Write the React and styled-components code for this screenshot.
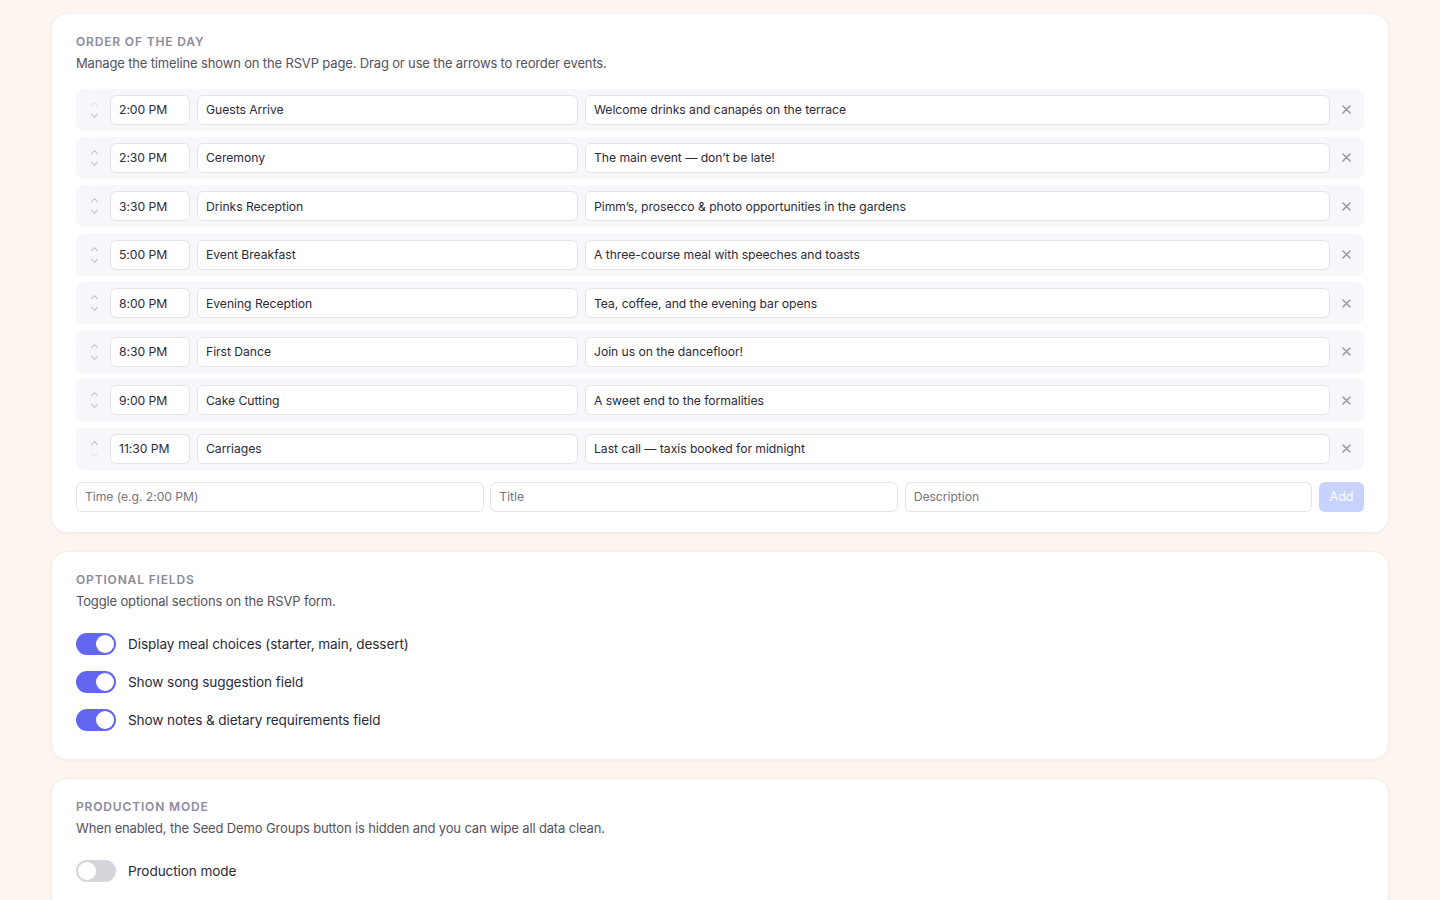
import React, { useState } from 'react'
import styled, { createGlobalStyle } from 'styled-components'

const GlobalStyle = createGlobalStyle`
  body {
    margin: 0;
    background: #fdf5ef;
    font-family: Inter, "Noto Sans", sans-serif;
    color: #2d2a3a;
  }
`

const initialEvents = [
  { time: '2:00 PM', title: 'Guests Arrive', desc: 'Welcome drinks and canapés on the terrace' },
  { time: '2:30 PM', title: 'Ceremony', desc: 'The main event — don’t be late!' },
  { time: '3:30 PM', title: 'Drinks Reception', desc: 'Pimm’s, prosecco & photo opportunities in the gardens' },
  { time: '5:00 PM', title: 'Event Breakfast', desc: 'A three-course meal with speeches and toasts' },
  { time: '8:00 PM', title: 'Evening Reception', desc: 'Tea, coffee, and the evening bar opens' },
  { time: '8:30 PM', title: 'First Dance', desc: 'Join us on the dancefloor!' },
  { time: '9:00 PM', title: 'Cake Cutting', desc: 'A sweet end to the formalities' },
  { time: '11:30 PM', title: 'Carriages', desc: 'Last call — taxis booked for midnight' },
]

const Chevron = ({ up, disabled }) => (
  <svg width="9" height="6" viewBox="0 0 9 6" fill="none">
    <path
      d={up ? 'M1.5 4.8L4.5 1.5L7.5 4.8' : 'M1.5 1.2L4.5 4.5L7.5 1.2'}
      stroke={disabled ? '#e4e4ec' : '#c4c3d0'}
      strokeWidth="1.1"
      strokeLinecap="round"
      strokeLinejoin="round"
    />
  </svg>
)

const CloseIcon = () => (
  <svg width="9" height="9" viewBox="0 0 9 9" fill="none">
    <path d="M1 1L8 8M8 1L1 8" stroke="#9a99aa" strokeWidth="1.6" strokeLinecap="round" />
  </svg>
)

const App = () => {
  const [events] = useState(initialEvents)
  const [options, setOptions] = useState({ meal: true, song: true, notes: true })
  const [production, setProduction] = useState(false)

  const toggle = (key) => setOptions({ ...options, [key]: !options[key] })

  return (
    <Page>
      <GlobalStyle />
      <Card>
        <Heading>Order of the Day</Heading>
        <Description>Manage the timeline shown on the RSVP page. Drag or use the arrows to reorder events.</Description>
        <EventList>
          {events.map((ev, i) => (
            <EventRow key={ev.time}>
              <Arrows>
                <ArrowButton><Chevron up disabled={i === 0} /></ArrowButton>
                <ArrowButton><Chevron disabled={i === events.length - 1} /></ArrowButton>
              </Arrows>
              <Field width="80px" defaultValue={ev.time} />
              <Field width="381px" defaultValue={ev.title} />
              <Field grow defaultValue={ev.desc} />
              <RemoveButton><CloseIcon /></RemoveButton>
            </EventRow>
          ))}
        </EventList>
        <AddRow>
          <Field grow placeholder="Time (e.g. 2:00 PM)" />
          <Field grow placeholder="Title" />
          <Field grow placeholder="Description" />
          <AddButton disabled>Add</AddButton>
        </AddRow>
      </Card>

      <Card>
        <Heading>Optional Fields</Heading>
        <Description>Toggle optional sections on the RSVP form.</Description>
        <ToggleList>
          <ToggleRow onClick={() => toggle('meal')}>
            <Switch on={options.meal} />
            Display meal choices (starter, main, dessert)
          </ToggleRow>
          <ToggleRow onClick={() => toggle('song')}>
            <Switch on={options.song} />
            Show song suggestion field
          </ToggleRow>
          <ToggleRow onClick={() => toggle('notes')}>
            <Switch on={options.notes} />
            Show notes &amp; dietary requirements field
          </ToggleRow>
        </ToggleList>
      </Card>

      <Card>
        <Heading>Production Mode</Heading>
        <Description>When enabled, the Seed Demo Groups button is hidden and you can wipe all data clean.</Description>
        <ToggleList>
          <ToggleRow onClick={() => setProduction(!production)}>
            <Switch on={production} />
            Production mode
          </ToggleRow>
        </ToggleList>
      </Card>
    </Page>
  )
}

const Page = styled.div`
  display: flex;
  flex-direction: column;
  gap: 20px;
  padding: 14px 52px 40px;
`

const Card = styled.section`
  background: #fff;
  border-radius: 16px;
  padding: 20px 24px 20px;
  box-shadow: 0 1px 3px rgba(120, 90, 70, 0.06);
  border: 1px solid #f6ede7;
  margin: -1px;
`

const Heading = styled.h2`
  margin: 0;
  font-size: 12px;
  line-height: 16px;
  font-weight: 600;
  letter-spacing: 0.07em;
  text-transform: uppercase;
  color: #8b8a9b;
`

const Description = styled.p`
  margin: 3px 0 0;
  font-size: 13px;
  line-height: 20px;
  letter-spacing: -0.15px;
  color: #55525f;
`

const EventList = styled.div`
  display: flex;
  flex-direction: column;
  gap: 6.45px;
  margin-top: 15.5px;
`

const EventRow = styled.div`
  display: flex;
  align-items: center;
  gap: 7px;
  padding: 6px 6px 6px 10px;
  background: #f7f7fb;
  border-radius: 8px;
`

const Arrows = styled.div`
  display: flex;
  flex-direction: column;
  align-items: center;
  gap: 6px;
  width: 16px;
  margin-right: 1px;
`

const ArrowButton = styled.button`
  display: flex;
  padding: 0;
  border: none;
  background: none;
  cursor: pointer;
`

const Field = styled.input`
  box-sizing: border-box;
  height: 30px;
  width: ${(p) => (p.grow ? 'auto' : p.width)};
  flex: ${(p) => (p.grow ? '1 1 0' : 'none')};
  min-width: 0;
  padding: 0 8px;
  border: 1px solid #e4e3eb;
  border-radius: 6px;
  background: #fff;
  font-family: inherit;
  font-size: 12.2px;
  letter-spacing: -0.05px;
  color: #2d2a3a;
  outline: none;

  &::placeholder {
    color: #77747f;
  }
`

const RemoveButton = styled.button`
  display: flex;
  align-items: center;
  justify-content: center;
  width: 24px;
  height: 24px;
  margin-left: -3px;
  padding: 0;
  border: none;
  background: none;
  cursor: pointer;
`

const AddRow = styled.div`
  display: flex;
  gap: 6.5px;
  margin-top: 12px;
`

const AddButton = styled.button`
  height: 30px;
  width: 45px;
  border: none;
  border-radius: 6px;
  background: #c7d2fe;
  color: #fff;
  font-family: inherit;
  font-size: 12.5px;
  cursor: default;
`

const ToggleList = styled.div`
  display: flex;
  flex-direction: column;
  gap: 16px;
  margin: 22px 0 8px;
`

const ToggleRow = styled.label`
  display: flex;
  align-items: center;
  gap: 12px;
  font-size: 13.6px;
  line-height: 22px;
  letter-spacing: -0.1px;
  color: #2d2a3a;
  cursor: pointer;
`

const Switch = styled.span`
  position: relative;
  flex: none;
  width: 40px;
  height: 22px;
  border-radius: 11px;
  background: ${(p) => (p.on ? '#6366f1' : '#d5d6dc')};

  &::after {
    content: '';
    position: absolute;
    top: 2px;
    left: ${(p) => (p.on ? '20px' : '2px')};
    width: 18px;
    height: 18px;
    border-radius: 50%;
    background: #fff;
  }
`

export default App
